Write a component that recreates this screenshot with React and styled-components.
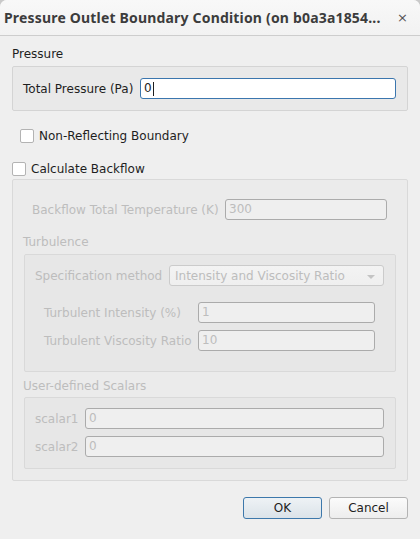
import React from "react";
import styled, { createGlobalStyle } from "styled-components";

const Global = createGlobalStyle`
  html, body { margin: 0; padding: 0; background: #c9c9c9; }
  body { font-family: "DejaVu Sans", "Liberation Sans", sans-serif; font-size: 12px; }
  * { box-sizing: border-box; }
`;

const Window = styled.div`
  width: 420px;
  height: 539px;
  background: #efefef;
  display: flex;
  flex-direction: column;
  border-radius: 7px 7px 0 0;
  overflow: hidden;
`;

const TitleBar = styled.div`
  height: 36px;
  flex: none;
  display: flex;
  align-items: center;
  justify-content: space-between;
  padding: 0 12px 0 4px;
  background: linear-gradient(#f8f8f8, #f2f2f2);
  border-bottom: 1px solid #cdcdcd;
`;

const Title = styled.div`
  font-family: "Noto Sans", "DejaVu Sans", sans-serif;
  font-weight: 700;
  font-size: 14px;
  letter-spacing: 0.18px;
  color: #3c3c3c;
  white-space: nowrap;
`;

const Close = styled.div`
  font-family: "DejaVu Sans", sans-serif;
  font-size: 13px;
  color: #555;
`;

const Content = styled.div`
  padding: 0 12px;
  display: flex;
  flex-direction: column;
`;

const GroupTitle = styled.div`
  height: ${(p) => p.$h}px;
  display: flex;
  align-items: flex-end;
  padding-bottom: ${(p) => p.$pb ?? 4}px;
  line-height: 15px;
  color: ${(p) => (p.$disabled ? "#bdbdbd" : "#1e1e1e")};
`;

const Frame = styled.div`
  border: 1px solid ${(p) => (p.$disabled ? "#d9d9d9" : "#d4d4d4")};
  border-radius: 2px;
  background: ${(p) => p.$bg || "#e9e9e9"};
  padding: ${(p) => p.$pad};
  margin: ${(p) => p.$margin || "0"};
  display: flex;
  flex-direction: column;
  gap: ${(p) => p.$gap || 0}px;
`;

const Row = styled.div`
  display: flex;
  align-items: center;
  height: 21px;
  margin-top: ${(p) => p.$mt || 0}px;
  padding: 0 ${(p) => p.$inset || 0}px;
`;

const Label = styled.div`
  width: ${(p) => p.$w}px;
  flex: none;
  white-space: nowrap;
  padding-left: ${(p) => p.$pl || 0}px;
  color: ${(p) => (p.$disabled ? "#bdbdbd" : "#1e1e1e")};
`;

const Input = styled.div`
  flex: 1;
  height: 21px;
  border-radius: 3px;
  border: 1px solid ${(p) => (p.$focus ? "#3b76ae" : "#ababab")};
  background: ${(p) => (p.$focus ? "#ffffff" : "#efefef")};
  color: ${(p) => (p.$focus ? "#1e1e1e" : "#bdbdbd")};
  padding-left: 3px;
  margin-right: ${(p) => p.$mr || 0}px;
  display: flex;
  align-items: center;
  line-height: 15px;
`;

const Caret = styled.span`
  display: inline-block;
  width: 1px;
  height: 14px;
  background: #1e1e1e;
  margin-left: 1px;
`;

const Combo = styled.div`
  flex: 1;
  height: 21px;
  border-radius: 3px;
  border: 1px solid #cbcbcb;
  background: linear-gradient(#f3f3f3, #efefef);
  color: #bdbdbd;
  padding: 0 8px 0 5px;
  display: flex;
  align-items: center;
  justify-content: space-between;
`;

const Arrow = styled.span`
  width: 0;
  height: 0;
  border-left: 4px solid transparent;
  border-right: 4px solid transparent;
  border-top: 4px solid #c4c4c4;
  margin-top: 2px;
`;

const CheckRow = styled.label`
  display: flex;
  align-items: center;
  height: 20px;
  margin-top: ${(p) => p.$mt}px;
  padding-left: ${(p) => p.$pl || 0}px;
  gap: 5px;
  color: #1e1e1e;
`;

const Box = styled.span`
  width: 14px;
  height: 14px;
  border: 1px solid #b3b3b3;
  border-radius: 2px;
  background: #fff;
  flex: none;
`;

const ButtonBar = styled.div`
  display: flex;
  justify-content: flex-end;
  gap: 7px;
  margin-top: 16px;
`;

const Button = styled.div`
  width: 79px;
  height: 22px;
  border-radius: 3px;
  display: flex;
  align-items: center;
  justify-content: center;
  color: #1e1e1e;
  border: 1px solid ${(p) => (p.$default ? "#3d78ab" : "#b3b3b3")};
  background: ${(p) =>
    p.$default
      ? "linear-gradient(#eef2f5, #dbe3e9)"
      : "linear-gradient(#fbfbfb, #ededed)"};
`;

export default function App() {
  return (
    <>
      <Global />
      <Window>
        <TitleBar>
          <Title>Pressure Outlet Boundary Condition (on b0a3a1854...</Title>
          <Close>×</Close>
        </TitleBar>
        <Content>
          <GroupTitle $h={30}>Pressure</GroupTitle>
          <Frame $pad="11px 11px 11px 10px">
            <Row>
              <Label $w={117}>Total Pressure (Pa)</Label>
              <Input $focus>
                0<Caret />
              </Input>
            </Row>
          </Frame>

          <CheckRow $mt={15} $pl={8}>
            <Box />
            Non-Reflecting Boundary
          </CheckRow>
          <CheckRow $mt={13} $pl={0}>
            <Box />
            Calculate Backflow
          </CheckRow>

          <Frame $pad="19px 11px 11px 10px" $bg="#ebebeb" $disabled>
            <Row>
              <Label $w={202} $pl={9} $disabled>
                Backflow Total Temperature (K)
              </Label>
              <Input $mr={9}>300</Input>
            </Row>

            <GroupTitle $h={34} $disabled>
              Turbulence
            </GroupTitle>
            <Frame $pad="10px 11px 20px 10px" $bg="#e7e7e7" $margin="0 0 0 1px" $disabled>
              <Row>
                <Label $w={134} $disabled>
                  Specification method
                </Label>
                <Combo>
                  Intensity and Viscosity Ratio
                  <Arrow />
                </Combo>
              </Row>
              <Row $mt={16} $inset={9}>
                <Label $w={154} $disabled>
                  Turbulent Intensity (%)
                </Label>
                <Input>1</Input>
              </Row>
              <Row $mt={7} $inset={9}>
                <Label $w={154} $disabled>
                  Turbulent Viscosity Ratio
                </Label>
                <Input>10</Input>
              </Row>
            </Frame>

            <GroupTitle $h={25} $pb={3} $disabled>
              User-defined Scalars
            </GroupTitle>
            <Frame $pad="10px 11px 11px 10px" $bg="#e7e7e7" $margin="0 0 0 1px" $gap={7} $disabled>
              <Row>
                <Label $w={50} $disabled>
                  scalar1
                </Label>
                <Input>0</Input>
              </Row>
              <Row>
                <Label $w={50} $disabled>
                  scalar2
                </Label>
                <Input>0</Input>
              </Row>
            </Frame>
          </Frame>

          <ButtonBar>
            <Button $default>OK</Button>
            <Button>Cancel</Button>
          </ButtonBar>
        </Content>
      </Window>
    </>
  );
}
